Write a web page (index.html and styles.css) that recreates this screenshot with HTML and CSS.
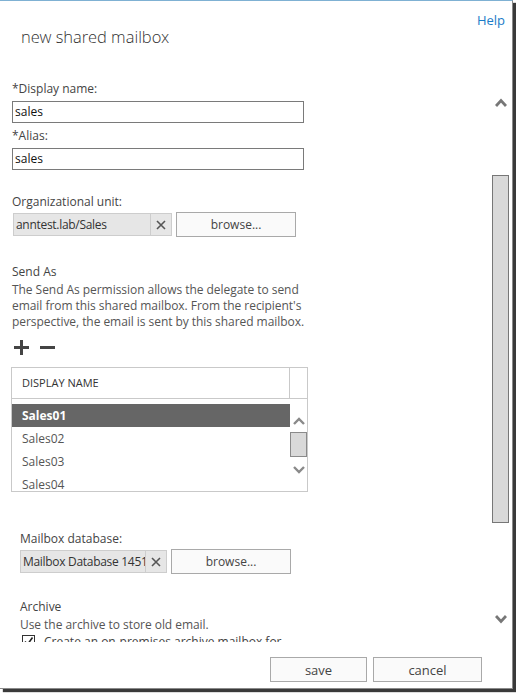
FILE: index.html
```html
<!DOCTYPE html>
<html>
<head>
<meta charset="utf-8">
<title>new shared mailbox</title>
<link rel="stylesheet" href="styles.css">
</head>
<body>
<div class="dialog">
  <div class="head">
    <h1 class="title">new shared mailbox</h1>
    <a class="help" href="#">Help</a>
  </div>
  <div class="main">
    <div class="content">
      <div class="label first">*Display name:</div>
      <div class="textbox">sales</div>
      <div class="label gap5">*Alias:</div>
      <div class="textbox">sales</div>

      <div class="label ou-label">Organizational unit:</div>
      <div class="pickrow ou-row">
        <div class="picker ou-picker">
          <span class="val">anntest.lab/Sales</span>
          <span class="clear"><svg width="10" height="10" viewBox="0 0 10 10"><path d="M1 1L9 9M9 1L1 9" stroke="#555" stroke-width="1.6" fill="none"/></svg></span>
        </div>
        <button class="btn browse">browse...</button>
      </div>

      <div class="label sendas">Send As</div>
      <div class="desc">The Send As permission allows the delegate to send<br>email from this shared mailbox. From the recipient's<br>perspective, the email is sent by this shared mailbox.</div>
      <div class="tools">
        <svg class="plus" width="15" height="15" viewBox="0 0 15 15"><path d="M7.5 0V15M0 7.5H15" stroke="#444" stroke-width="3" fill="none"/></svg>
        <svg class="minus" width="15" height="15" viewBox="0 0 15 15"><path d="M0 7.5H15" stroke="#444" stroke-width="3" fill="none"/></svg>
      </div>

      <div class="grid">
        <div class="ghead">
          <div class="gcol">DISPLAY NAME</div>
          <div class="gsep"></div>
        </div>
        <div class="gbody">
          <div class="rows">
            <div class="row selected">Sales01</div>
            <div class="row">Sales02</div>
            <div class="row">Sales03</div>
            <div class="row">Sales04</div>
          </div>
          <div class="gscroll">
            <svg class="gup" width="12" height="8" viewBox="0 0 12 8"><path d="M1 7L6 2L11 7" stroke="#8a8a8a" stroke-width="2.4" fill="none"/></svg>
            <div class="gthumb"></div>
            <svg class="gdown" width="12" height="8" viewBox="0 0 12 8"><path d="M1 1L6 6L11 1" stroke="#8a8a8a" stroke-width="2.4" fill="none"/></svg>
          </div>
        </div>
      </div>

      <div class="indent">
        <div class="label mb-label">Mailbox database:</div>
        <div class="pickrow mb-row">
          <div class="picker mb-picker">
            <span class="val">Mailbox Database 1451</span>
            <span class="clear"><svg width="10" height="10" viewBox="0 0 10 10"><path d="M1 1L9 9M9 1L1 9" stroke="#555" stroke-width="1.6" fill="none"/></svg></span>
          </div>
          <button class="btn browse">browse...</button>
        </div>

        <div class="label archive">Archive</div>
        <div class="desc">Use the archive to store old email.</div>
        <div class="check">
          <span class="box"><svg width="11" height="11" viewBox="0 0 11 11"><path d="M2 5.5L4.5 8.5L9.5 1.5" stroke="#222" stroke-width="1.6" fill="none"/></svg></span>
          <span class="checktext">Create an on-premises archive mailbox for this shared mailbox</span>
        </div>
      </div>
    </div>
    <div class="vscroll">
      <svg class="up" width="12" height="9" viewBox="0 0 12 9"><path d="M1 8L6 2.5L11 8" stroke="#777" stroke-width="2.8" fill="none"/></svg>
      <div class="thumb"></div>
      <svg class="down" width="12" height="9" viewBox="0 0 12 9"><path d="M1 1L6 6.5L11 1" stroke="#777" stroke-width="2.8" fill="none"/></svg>
    </div>
  </div>
  <div class="footer">
    <button class="btn save">save</button>
    <button class="btn cancel">cancel</button>
  </div>
</div>
</body>
</html>
```

FILE: styles.css
```css
* { box-sizing: border-box; }
html, body { margin: 0; padding: 0; }
body {
  width: 516px;
  height: 695px;
  overflow: hidden;
  background: #fff;
  font-family: "Segoe UI", "Open Sans", "Noto Sans", "DejaVu Sans", sans-serif;
  font-size: 12px;
  color: #444;
}
.dialog {
  width: 513px;
  height: 689px;
  border-top: 1px solid #7fb1d3;
  border-right: 1px solid #8a8a8a;
  border-bottom: 1px solid #8a8a8a;
  box-shadow: 3px 3px 1px #3a3a3a;
  background: #fff;
  display: flex;
  flex-direction: column;
}
.head {
  height: 59px;
  display: flex;
  justify-content: space-between;
  align-items: flex-start;
}
.title {
  margin: 24px 0 0 21px;
  font-family: "Open Sans Light", "Open Sans", "Noto Sans", sans-serif;
  font-size: 16.5px;
  line-height: 24px;
  font-weight: 300;
  color: #333;
}
.help {
  margin: 10px 7px 0 0;
  font-size: 13px;
  line-height: 18px;
  color: #1a7cc8;
  text-decoration: none;
}
.main {
  height: 582px;
  display: flex;
  padding-right: 2px;
}
.content {
  flex: 1;
  overflow: hidden;
  padding-left: 12px;
}
.label { line-height: 16px; color: #444; white-space: nowrap; }
.first { margin-top: 21px; }
.gap5 { margin-top: 5px; }
.textbox {
  width: 292px;
  height: 22px;
  margin-top: 4px;
  border: 1px solid #7a7a7a;
  padding-left: 2px;
  line-height: 20px;
  color: #111;
}
.ou-label { margin-top: 24px; }
.pickrow {
  display: flex;
  align-items: center;
  height: 25px;
  margin-top: 2px;
}
.picker {
  height: 23px;
  background: #e6e6e6;
  border: 1px solid #cdcdcd;
  display: flex;
  color: #333;
}
.picker .val {
  flex: 1;
  overflow: hidden;
  white-space: nowrap;
  padding-left: 2px;
  line-height: 22px;
  letter-spacing: -0.3px;
}
.picker .clear {
  width: 21px;
  border-left: 1px solid #cdcdcd;
  display: flex;
  align-items: center;
  justify-content: center;
}
.ou-picker { width: 159px; margin-left: 1px; }
.mb-picker { width: 147px; }
.btn {
  font-family: inherit;
  font-size: 12px;
  color: #444;
  background: #fafafa;
  border: 1px solid #a9a9a9;
  padding: 0;
  height: 25px;
}
.browse { width: 120px; margin-left: 4px; }
.sendas { margin-top: 27px; }
.desc { margin-top: 2px; line-height: 16px; color: #555; white-space: nowrap; letter-spacing: -0.05px; }
.tools {
  margin-top: 10px;
  height: 15px;
  display: flex;
  gap: 11px;
  padding-left: 2px;
}
.grid {
  width: 297px;
  height: 125px;
  margin-top: 12px;
  margin-left: -1px;
  border: 1px solid #c9c9c9;
  display: flex;
  flex-direction: column;
}
.ghead {
  height: 31px;
  border-bottom: 1px solid #c9c9c9;
  display: flex;
}
.gcol {
  flex: 1;
  padding-left: 10px;
  line-height: 30px;
  font-size: 11px;
  color: #333;
}
.gsep { width: 18px; border-left: 1px solid #c9c9c9; }
.gbody { flex: 1; display: flex; overflow: hidden; }
.rows { flex: 1; padding-top: 5px; overflow: hidden; }
.row {
  height: 23px;
  line-height: 23px;
  padding-left: 10px;
  color: #555;
}
.row.selected { background: #666; color: #fff; font-weight: bold; }
.gscroll {
  width: 17px;
  display: flex;
  flex-direction: column;
  align-items: center;
}
.gup { margin-top: 18px; }
.gthumb {
  width: 17px;
  height: 25px;
  margin-top: 7px;
  background: #d9d9d9;
  border: 1px solid #8a8a8a;
}
.gdown { margin-top: 9px; }
.indent { margin-left: 8px; }
.mb-label { margin-top: 39px; }
.archive { margin-top: 25px; }
.check {
  display: flex;
  align-items: flex-start;
  line-height: 16px;
  color: #444;
  margin-top: 1px;
}
.check .box {
  width: 13px;
  height: 13px;
  border: 1px solid #333;
  margin: 1px 9px 0 2px;
  display: flex;
  align-items: center;
  justify-content: center;
  flex: none;
}
.checktext { width: 240px; }
.vscroll {
  width: 20px;
  padding-left: 2px;
  display: flex;
  flex-direction: column;
}
.vscroll .up { margin: 38px 0 0 3px; }
.thumb {
  width: 17px;
  height: 348px;
  margin-top: 68px;
  background: #d9d9d9;
  border: 1px solid #777;
}
.vscroll .down { margin: 92px 0 0 3px; }
.footer {
  display: flex;
  justify-content: flex-end;
  gap: 6px;
  padding: 15px 30px 0 0;
}
.save { width: 97px; font-size: 13px; }
.cancel { width: 109px; font-size: 13px; }
```
